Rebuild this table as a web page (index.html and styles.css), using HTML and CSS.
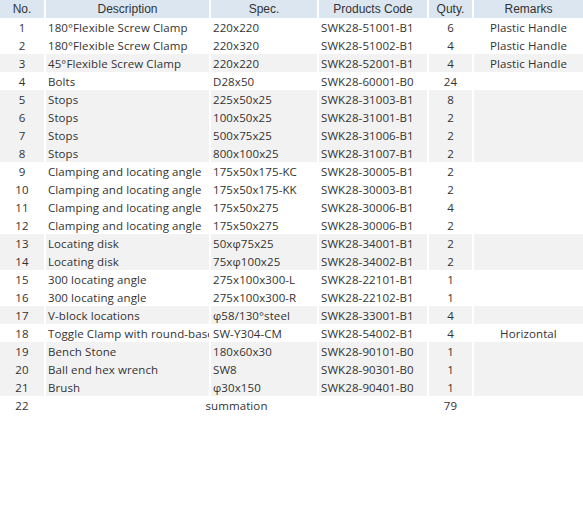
FILE: index.html
```html
<!DOCTYPE html>
<html>
<head>
<meta charset="utf-8">
<link rel="stylesheet" href="styles.css">
</head>
<body>
<table class="parts">
<colgroup>
<col class="c-no"><col class="c-desc"><col class="c-spec"><col class="c-code"><col class="c-qty"><col class="c-rem">
</colgroup>
<thead>
<tr><th>No.</th><th>Description</th><th>Spec.</th><th>Products Code</th><th>Quty.</th><th>Remarks</th></tr>
</thead>
<tbody>
<tr><td class="no">1</td><td>180°Flexible Screw Clamp</td><td>220x220</td><td>SWK28-51001-B1</td><td class="qty">6</td><td class="rem">Plastic Handle</td></tr>
<tr><td class="no">2</td><td>180°Flexible Screw Clamp</td><td>220x320</td><td>SWK28-51002-B1</td><td class="qty">4</td><td class="rem">Plastic Handle</td></tr>
<tr class="alt"><td class="no">3</td><td>45°Flexible Screw Clamp</td><td>220x220</td><td>SWK28-52001-B1</td><td class="qty">4</td><td class="rem">Plastic Handle</td></tr>
<tr><td class="no">4</td><td>Bolts</td><td>D28x50</td><td>SWK28-60001-B0</td><td class="qty">24</td><td class="rem"></td></tr>
<tr class="alt"><td class="no">5</td><td>Stops</td><td>225x50x25</td><td>SWK28-31003-B1</td><td class="qty">8</td><td class="rem"></td></tr>
<tr class="alt"><td class="no">6</td><td>Stops</td><td>100x50x25</td><td>SWK28-31001-B1</td><td class="qty">2</td><td class="rem"></td></tr>
<tr class="alt"><td class="no">7</td><td>Stops</td><td>500x75x25</td><td>SWK28-31006-B1</td><td class="qty">2</td><td class="rem"></td></tr>
<tr class="alt"><td class="no">8</td><td>Stops</td><td>800x100x25</td><td>SWK28-31007-B1</td><td class="qty">2</td><td class="rem"></td></tr>
<tr><td class="no">9</td><td>Clamping and locating angle</td><td>175x50x175-KC</td><td>SWK28-30005-B1</td><td class="qty">2</td><td class="rem"></td></tr>
<tr><td class="no">10</td><td>Clamping and locating angle</td><td>175x50x175-KK</td><td>SWK28-30003-B1</td><td class="qty">2</td><td class="rem"></td></tr>
<tr><td class="no">11</td><td>Clamping and locating angle</td><td>175x50x275</td><td>SWK28-30006-B1</td><td class="qty">4</td><td class="rem"></td></tr>
<tr><td class="no">12</td><td>Clamping and locating angle</td><td>175x50x275</td><td>SWK28-30006-B1</td><td class="qty">2</td><td class="rem"></td></tr>
<tr class="alt"><td class="no">13</td><td>Locating disk</td><td>50xφ75x25</td><td>SWK28-34001-B1</td><td class="qty">2</td><td class="rem"></td></tr>
<tr class="alt"><td class="no">14</td><td>Locating disk</td><td>75xφ100x25</td><td>SWK28-34002-B1</td><td class="qty">2</td><td class="rem"></td></tr>
<tr><td class="no">15</td><td>300 locating angle</td><td>275x100x300-L</td><td>SWK28-22101-B1</td><td class="qty">1</td><td class="rem"></td></tr>
<tr><td class="no">16</td><td>300 locating angle</td><td>275x100x300-R</td><td>SWK28-22102-B1</td><td class="qty">1</td><td class="rem"></td></tr>
<tr class="alt"><td class="no">17</td><td>V-block locations</td><td>φ58/130°steel</td><td>SWK28-33001-B1</td><td class="qty">4</td><td class="rem"></td></tr>
<tr><td class="no">18</td><td>Toggle Clamp with round-base</td><td>SW-Y304-CM</td><td>SWK28-54002-B1</td><td class="qty">4</td><td class="rem">Horizontal</td></tr>
<tr class="alt"><td class="no">19</td><td>Bench Stone</td><td>180x60x30</td><td>SWK28-90101-B0</td><td class="qty">1</td><td class="rem"></td></tr>
<tr class="alt"><td class="no">20</td><td>Ball end hex wrench</td><td>SW8</td><td>SWK28-90301-B0</td><td class="qty">1</td><td class="rem"></td></tr>
<tr class="alt"><td class="no">21</td><td>Brush</td><td>φ30x150</td><td>SWK28-90401-B0</td><td class="qty">1</td><td class="rem"></td></tr>
<tr class="sum"><td class="no">22</td><td colspan="3" class="sumlabel">summation</td><td class="qty">79</td><td class="rem"></td></tr>
</tbody>
</table>
</body>
</html>
```

FILE: styles.css
```css
html, body {
  margin: 0;
  padding: 0;
  background: #ffffff;
}

.parts {
  border-collapse: separate;
  border-spacing: 2px 0;
  margin: 0 -2px;
  table-layout: fixed;
  width: 587px;
  font-family: "Open Sans", "DejaVu Sans", sans-serif;
  font-size: 11.5px;
  letter-spacing: 0.1px;
  color: #333333;
}

.c-no { width: 44px; }
.c-desc { width: 163px; }
.c-spec { width: 106px; }
.c-code { width: 108px; }
.c-qty { width: 43px; }
.c-rem { width: 109px; }

.parts th {
  background: #dce6f1;
  font-family: "Liberation Sans", Arial, sans-serif;
  font-weight: normal;
  font-size: 12px;
  letter-spacing: 0;
  color: #333333;
  height: 18px;
  line-height: 18px;
  padding: 0;
  text-align: center;
  white-space: nowrap;
  overflow: hidden;
}

.parts td {
  box-sizing: border-box;
  height: 18px;
  line-height: 17px;
  padding: 1px 0 0 2px;
  white-space: nowrap;
  overflow: hidden;
  text-align: left;
}

.parts tr.alt td {
  background: #f2f2f2;
}

.parts td.no,
.parts td.qty,
.parts td.rem,
.parts td.sumlabel {
  text-align: center;
  padding: 1px 0 0 0;
}
```
